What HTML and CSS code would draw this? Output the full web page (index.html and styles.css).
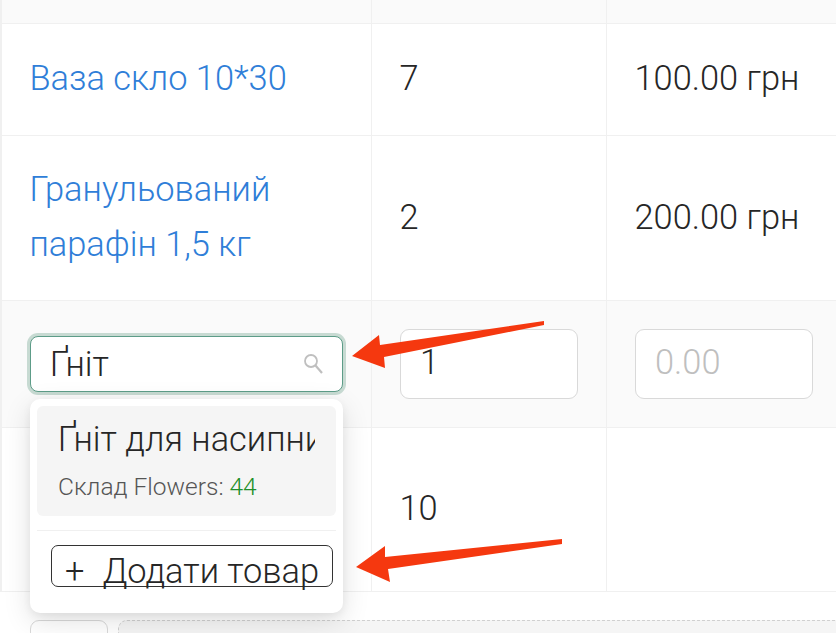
FILE: index.html
```html
<!DOCTYPE html>
<html lang="uk">
<head>
<meta charset="utf-8">
<title>Товари</title>
<link rel="stylesheet" href="styles.css">
</head>
<body>
<div class="page">
  <div class="table">
    <div class="row row-head"><div class="cell"></div><div class="cell"></div><div class="cell"></div></div>
    <div class="row row-one">
      <div class="cell cell-text"><a class="link" href="#">Ваза скло 10*30</a></div>
      <div class="cell cell-text">7</div>
      <div class="cell cell-text">100.00 грн</div>
    </div>
    <div class="row row-two">
      <div class="cell cell-text"><a class="link" href="#">Гранульований парафін 1,5 кг</a></div>
      <div class="cell cell-text">2</div>
      <div class="cell cell-text">200.00 грн</div>
    </div>
    <div class="row row-edit">
      <div class="cell">
        <div class="search">
          <span class="search-text">Ґніт</span>
          <svg class="search-icon" viewBox="0 0 20 22" width="20" height="22" aria-hidden="true"><circle cx="8" cy="8" r="6" fill="none" stroke="#bfbfbf" stroke-width="1.8"/><path d="M12.5 12.5 19 20" fill="none" stroke="#bfbfbf" stroke-width="2.2"/></svg>
        </div>
      </div>
      <div class="cell"><div class="field">1</div></div>
      <div class="cell"><div class="field field-empty">0.00</div></div>
    </div>
    <div class="row row-last">
      <div class="cell"></div>
      <div class="cell cell-text">10</div>
      <div class="cell"></div>
    </div>
  </div>
  <div class="footer">
    <div class="footer-btn"></div>
    <div class="footer-drop"></div>
  </div>

  <div class="dropdown">
    <div class="option">
      <div class="option-name">Ґніт для насипних свічок</div>
      <div class="option-stock">Склад Flowers: <span class="stock-num">44</span></div>
    </div>
    <div class="divider"></div>
    <div class="add-btn"><span class="add-plus">+</span><span class="add-text">Додати товар</span></div>
  </div>

  <svg class="arrows" viewBox="0 0 836 633" width="836" height="633" aria-hidden="true">
    <polygon fill="#f5380f" points="544,321 544,325 384,357 385,368 352,356 379,335 380,345"/>
    <polygon fill="#f5380f" points="562,539 562,544 388,569 390,582 356,567 385,546 385,557"/>
  </svg>
</div>
</body>
</html>
```

FILE: styles.css
```css
* { box-sizing: border-box; }
html, body { margin: 0; padding: 0; background: #fff; }
body {
  font-family: Roboto, "Noto Sans", sans-serif;
  font-weight: 300;
  font-size: 34.4px;
  color: #262626;
  overflow: hidden;
}
.page { position: relative; width: 836px; height: 633px; overflow: hidden; }
.table { border-left: 2px solid #f0f0f0; }
.row {
  display: grid;
  grid-template-columns: 370px 235px 229px;
  border-bottom: 1px solid #f0f0f0;
}
.row-head { height: 24px; background: #fafafa; }
.row-one { height: 112px; }
.row-two { height: 165px; }
.row-edit { height: 127px; background: #fafafa; }
.row-last { height: 164px; }
.cell {
  display: flex;
  align-items: center;
  padding: 0 22px 0 28px;
  border-right: 1px solid #f0f0f0;
  line-height: 55px;
}
.cell:last-child { border-right: 0; }
.cell-text { padding: 0 22px 2px 27.5px; }
.link { color: #2f7ed8; text-decoration: none; }
.search {
  display: flex;
  align-items: center;
  justify-content: space-between;
  width: 313px;
  height: 56px;
  padding: 0 19px 0 20px;
  background: #fff;
  border: 1px solid #5d9c88;
  border-radius: 8px;
  box-shadow: 0 0 0 3px #c7dad2;
  flex: none;
}
.search-text { line-height: 52px; margin-left: -1px; }
.search-icon { flex: none; }
.field {
  width: 178px;
  height: 70px;
  flex: none;
  padding: 0 19px;
  background: #fff;
  border: 1px solid #d9d9d9;
  border-radius: 9px;
  line-height: 64px;
}
.field-empty { color: #bfbfbf; }
.footer {
  display: flex;
  gap: 10px;
  padding: 28px 0 0 30px;
}
.footer-btn {
  width: 78px;
  height: 30px;
  flex: none;
  background: #fff;
  border: 1px solid #d9d9d9;
  border-radius: 9px;
}
.footer-drop {
  flex: 1;
  height: 30px;
  margin-right: -10px;
  background: #f5f5f5;
  border: 1px dashed #d0d0d0;
  border-radius: 9px;
}
.dropdown {
  position: absolute;
  left: 30px;
  top: 399px;
  width: 313px;
  height: 214px;
  padding: 7px;
  background: #fff;
  border-radius: 10px;
  box-shadow: 0 8px 28px rgba(0, 0, 0, .12), 0 3px 8px rgba(0, 0, 0, .06);
}
.option {
  height: 110px;
  padding: 8px 21px 0;
  background: #f5f5f5;
  border-radius: 6px;
}
.option-name {
  white-space: nowrap;
  overflow: hidden;
  line-height: 50px;
}
.option-stock {
  font-size: 24.5px;
  line-height: 46px;
  color: #555;
}
.stock-num { color: #1f8f2a; }
.divider { height: 1px; margin-top: 14px; background: #f0f0f0; }
.add-btn {
  display: flex;
  gap: 18px;
  height: 42px;
  margin: 14px 3px 0 14px;
  padding: 0 13px;
  border: 1px solid #333;
  border-radius: 7px;
  white-space: nowrap;
  line-height: 50px;
}
.add-plus, .add-text { display: block; }
.arrows { position: absolute; left: 0; top: 0; pointer-events: none; }
```
